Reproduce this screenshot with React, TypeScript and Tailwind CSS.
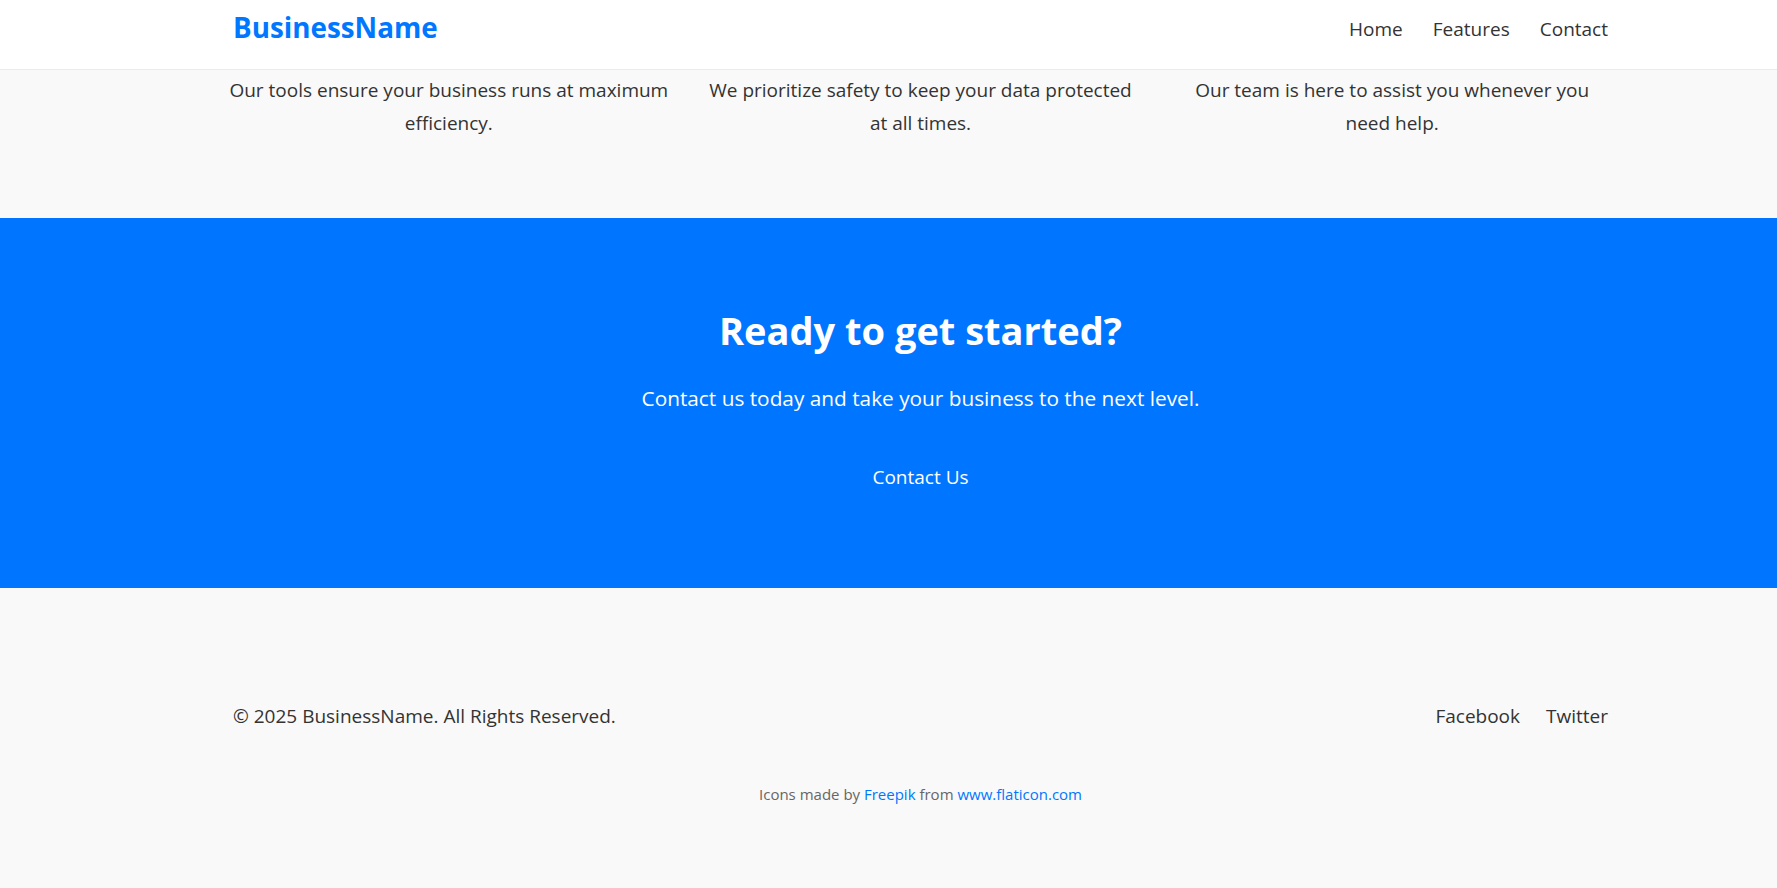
const font = { fontFamily: '"Open Sans", "Noto Sans", sans-serif' };

function Header() {
  return (
    <header className="h-[70px] bg-white border-b border-[#ebebeb]">
      <div className="ml-[233px] w-[1375px] h-full flex items-center justify-between pb-[13px]">
        <span className="text-[27.8px] font-bold leading-none text-[#0077ff] -mt-px">BusinessName</span>
        <nav className="flex gap-[30px] text-[19px] leading-none text-[#333] pt-[2px]">
          <a>Home</a>
          <a>Features</a>
          <a>Contact</a>
        </nav>
      </div>
    </header>
  );
}

// first column needs a few px more room so "maximum" stays on line one
const features = [
  { text: "Our tools ensure your business runs at maximum efficiency.", wide: true },
  { text: "We prioritize safety to keep your data protected at all times.", wide: false },
  { text: "Our team is here to assist you whenever you need help.", wide: false },
];

export default function App() {
  return (
    <div style={font} className="min-h-[888px] bg-[#f9f9f9] text-[#333]">
      <Header />

      {/* Features (scrolled, only text visible) */}
      <section className="pt-[4px] pb-[78px]">
        <div className="ml-[233px] w-[1375px] grid grid-cols-3 gap-[40px]">
          {features.map((f) => (
            <p
              key={f.text}
              className={`${f.wide ? "-mx-[6px]" : ""} text-center text-[19px] leading-[33px]`}
            >
              {f.text}
            </p>
          ))}
        </div>
      </section>

      {/* CTA */}
      <section className="bg-[#0075ff] text-white pt-[90px] pb-[94px]">
        <div className="ml-[233px] w-[1375px] flex flex-col items-center text-center">
          <h2 className="text-[38px] font-bold leading-[44px]">Ready to get started?</h2>
          <p className="mt-[30px] text-[20.8px] leading-[33px]">
            Contact us today and take your business to the next level.
          </p>
          <a className="mt-[46px] text-[19px] leading-[33px]">Contact Us</a>
        </div>
      </section>

      {/* Footer */}
      <footer className="pt-[112px] pb-[80px]">
        <div className="ml-[233px] w-[1375px] flex items-center justify-between text-[19px] leading-[33px]">
          <p>© 2025 BusinessName. All Rights Reserved.</p>
          <div className="flex gap-[26px]">
            <a>Facebook</a>
            <a>Twitter</a>
          </div>
        </div>
        <p className="ml-[233px] w-[1375px] mt-[49px] text-center text-[15px] leading-[24px] text-[#666]">
          Icons made by <a className="text-[#0077ff]">Freepik</a> from{" "}
          <a className="text-[#0077ff]">www.flaticon.com</a>
        </p>
      </footer>
    </div>
  );
}
